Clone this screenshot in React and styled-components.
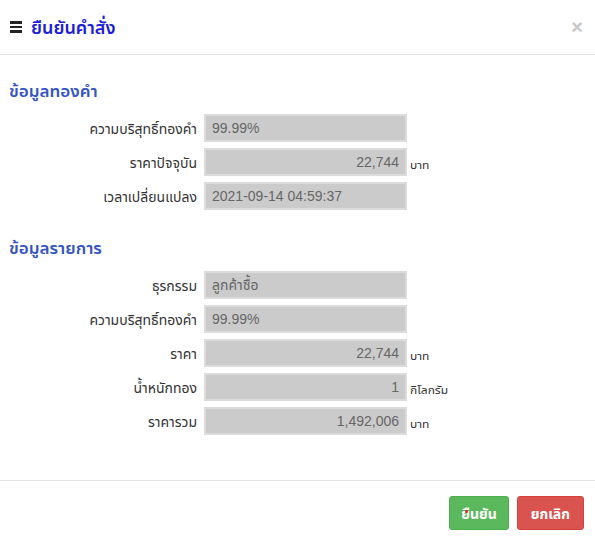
import React from 'react';
import styled, { createGlobalStyle } from 'styled-components';

const thai = `'Liberation Sans', 'Noto Sans Thai UI', 'Noto Sans Thai', 'Leelawadee UI', 'Noto Sans', sans-serif`;

const GlobalStyle = createGlobalStyle`
	html, body {
		margin: 0;
		padding: 0;
		background: #fff;
	}
	body {
		font-family: ${thai};
		font-size: 14px;
		color: #333;
	}
`;

const Modal = styled.div`
	width: 595px;
	height: 542px;
	display: flex;
	flex-direction: column;
	background: #fff;
	box-sizing: border-box;
`;

const Header = styled.div`
	display: flex;
	align-items: center;
	justify-content: space-between;
	height: 55px;
	padding: 0 12px 0 10px;
	border-bottom: 1px solid #e5e5e5;
	box-sizing: border-box;
`;

const Title = styled.h4`
	display: flex;
	align-items: center;
	gap: 9px;
	margin: 0;
	font-size: 18px;
	font-weight: 600;
	color: #1c1cd9;
`;

const Burger = styled.span`
	display: flex;
	flex-direction: column;
	gap: 2px;
	width: 12px;
	> i {
		display: block;
		height: 2.5px;
		background: #222;
	}
`;

const Close = styled.button`
	border: none;
	background: none;
	padding: 0;
	font-family: 'Liberation Sans', Arial, sans-serif;
	font-size: 20px;
	font-weight: bold;
	color: #c8c8c8;
	line-height: 1;
	cursor: pointer;
`;

const Body = styled.div`
	flex: 1;
	padding: 25px 9px 0;
`;

const SectionTitle = styled.h5`
	margin: 0 0 10px;
	font-size: 17px;
	font-weight: 600;
	color: #3454c3;
	line-height: 24px;
`;

const Section = styled.div`
	margin-bottom: 27px;
`;

const Rows = styled.div`
	display: flex;
	flex-direction: column;
	gap: 6px;
`;

const Row = styled.div`
	display: grid;
	grid-template-columns: 188px 203px auto;
	column-gap: 7px;
	align-items: center;
`;

const Label = styled.label`
	text-align: right;
	color: #333;
	font-size: 14px;
`;

const Field = styled.div`
	height: 28px;
	box-sizing: border-box;
	border: 2px solid #dcdcdc;
	background: #cbcbcb;
	color: #666;
	font-size: 14px;
	line-height: 24px;
	padding: 0 6px;
	text-align: ${props => (props.right ? 'right' : 'left')};
`;

const Unit = styled.span`
	margin-left: -4px;
	font-size: 12px;
	color: #333;
	padding-top: 4px;
`;

const Footer = styled.div`
	display: flex;
	justify-content: flex-end;
	gap: 8px;
	padding: 15px 11px 12px;
	border-top: 1px solid #e5e5e5;
`;

const Button = styled.button`
	position: relative;
	height: 34px;
	padding: 0 ${props => (props.danger ? '13px' : '11px')};
	border: 1px solid ${props => (props.danger ? '#d43f3a' : '#4cae4c')};
	border-radius: 3px;
	background: ${props => (props.danger ? '#d9534f' : '#5cb85c')};
	color: #fff;
	font-family: ${thai};
	font-size: 14px;
	font-weight: bold;
	cursor: pointer;
`;

const Dot = styled.span`
	position: absolute;
	left: 15px;
	top: 13px;
	width: 3px;
	height: 3px;
	border-radius: 50%;
	background: #e8232a;
`;

const goldRows = [
	{ label: 'ความบริสุทธิ์ทองคำ', value: '99.99%' },
	{ label: 'ราคาปัจจุบัน', value: '22,744', right: true, unit: 'บาท' },
	{ label: 'เวลาเปลี่ยนแปลง', value: '2021-09-14 04:59:37' }
];

const orderRows = [
	{ label: 'ธุรกรรม', value: 'ลูกค้าซื้อ' },
	{ label: 'ความบริสุทธิ์ทองคำ', value: '99.99%' },
	{ label: 'ราคา', value: '22,744', right: true, unit: 'บาท' },
	{ label: 'น้ำหนักทอง', value: '1', right: true, unit: 'กิโลกรัม' },
	{ label: 'ราคารวม', value: '1,492,006', right: true, unit: 'บาท' }
];

const FieldRows = ({ rows }) => (
	<Rows>
		{rows.map(row => (
			<Row key={row.label}>
				<Label>{row.label}</Label>
				<Field right={row.right}>{row.value}</Field>
				{row.unit ? <Unit>{row.unit}</Unit> : <span />}
			</Row>
		))}
	</Rows>
);

export default function App() {
	return (
		<Modal>
			<GlobalStyle />
			<Header>
				<Title>
					<Burger>
						<i />
						<i />
						<i />
					</Burger>
					ยืนยันคำสั่ง
				</Title>
				<Close>×</Close>
			</Header>
			<Body>
				<Section>
					<SectionTitle>ข้อมูลทองคำ</SectionTitle>
					<FieldRows rows={goldRows} />
				</Section>
				<Section>
					<SectionTitle>ข้อมูลรายการ</SectionTitle>
					<FieldRows rows={orderRows} />
				</Section>
			</Body>
			<Footer>
				<Button>
					<Dot />
					ยืนยัน
				</Button>
				<Button danger>ยกเลิก</Button>
			</Footer>
		</Modal>
	);
}
